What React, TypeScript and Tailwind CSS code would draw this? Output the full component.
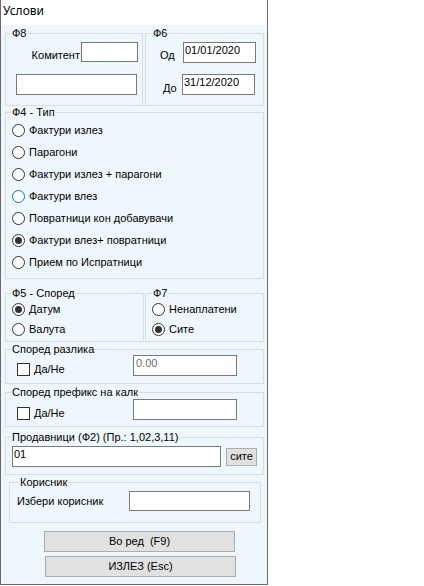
import React from "react";

function Radio({ checked = false, focus = false }: { checked?: boolean; focus?: boolean }) {
  return (
    <span
      className={`w-[13px] h-[13px] rounded-full border ${focus ? "border-[#0078d7]" : "border-[#333333]"} bg-white flex items-center justify-center shrink-0`}
    >
      {checked && <span className="w-[7px] h-[7px] rounded-full bg-[#333333]" />}
    </span>
  );
}

function Check() {
  return <span className="w-[13px] h-[13px] border border-[#333333] bg-white shrink-0" />;
}

function Group({
  title,
  className = "",
  legendClass = "ml-[5px]",
  children,
}: {
  title: string;
  className?: string;
  legendClass?: string;
  children?: React.ReactNode;
}) {
  return (
    <fieldset className={`border border-[#d7dde1] p-0 m-0 min-w-0 ${className}`}>
      <legend className={`leading-[12px] px-[1px] whitespace-pre ${legendClass}`}>{title}</legend>
      {children}
    </fieldset>
  );
}

function RadioRow({
  label,
  checked,
  focus,
  h = "h-[22px]",
}: {
  label: string;
  checked?: boolean;
  focus?: boolean;
  h?: string;
}) {
  return (
    <div className={`flex items-center gap-[4px] ${h}`}>
      <Radio checked={checked} focus={focus} />
      <span className="leading-[13px] whitespace-pre">{label}</span>
    </div>
  );
}

export default function App() {
  return (
    <div className="w-[268px] h-[585px] border-x border-b border-[#6b6b6b] flex flex-col text-[11px] text-black font-['Liberation_Sans',Arial,sans-serif]">
      <div className="h-[25px] bg-white pl-[2px] pt-[3px] text-[12px] leading-[16px] font-['Noto_Sans',sans-serif]">
        Услови
      </div>
      <div className="flex-1 bg-[#eef7fc] pl-[4px] pr-[3px] flex flex-col">
        {/* Row 1 */}
        <div className="flex gap-[2px] mt-[2px]">
          <Group title="Ф8" className="w-[138px] h-[79px]">
            <div className="flex justify-end items-end pr-[4px] mt-[3px] gap-[1px]">
              <span className="leading-[13px]">Комитент</span>
              <div className="w-[57px] h-[20px] bg-white border border-[#7a7a7a]" />
            </div>
            <div className="ml-[10px] mt-[12px] w-[121px] h-[21px] bg-white border border-[#7a7a7a]" />
          </Group>
          <Group title="Ф6" className="w-[119px] h-[79px]" legendClass="ml-[6px]">
            <div className="flex items-end mt-[3px] pl-[14px]">
              <span className="w-[23px] leading-[13px] mb-[1px]">Од</span>
              <div className="w-[73px] h-[21px] bg-white border border-[#7a7a7a] pl-[1px] pt-[1px] leading-[13px]">
                01/01/2020
              </div>
            </div>
            <div className="flex items-end mt-[11px] pl-[17px]">
              <span className="w-[19px] leading-[13px]">До</span>
              <div className="w-[73px] h-[21px] bg-white border border-[#7a7a7a] pl-[1px] pt-[1px] leading-[13px]">
                31/12/2020
              </div>
            </div>
          </Group>
        </div>

        {/* Ф4 */}
        <Group title="Ф4 - Тип" className="h-[173px]">
          <div className="pt-[1px] pl-[6px] flex flex-col">
            <RadioRow label="Фактури излез" />
            <RadioRow label="Парагони" />
            <RadioRow label="Фактури излез + парагони" />
            <RadioRow label="Фактури влез" focus />
            <RadioRow label="Повратници кон добавувачи" />
            <RadioRow label="Фактури влез+ повратници" checked />
            <RadioRow label="Прием по Испратници" />
          </div>
        </Group>

        {/* Ф5 / Ф7 */}
        <div className="flex gap-[1px] mt-[8px]">
          <Group title="Ф5 - Според" className="w-[139px] h-[55px]">
            <div className="pl-[6px] flex flex-col">
              <RadioRow label="Датум" checked h="h-[20px]" />
              <RadioRow label="Валута" h="h-[20px]" />
            </div>
          </Group>
          <Group title="Ф7" className="w-[119px] h-[55px]" legendClass="ml-[6px]">
            <div className="pl-[6px] flex flex-col">
              <RadioRow label="Ненаплатени" h="h-[20px]" />
              <RadioRow label="Сите" checked h="h-[20px]" />
            </div>
          </Group>
        </div>

        {/* Според разлика */}
        <Group title="Според разлика" className="h-[41px] mt-[1px]">
          <div className="flex items-end pl-[11px]">
            <div className="flex items-center gap-[4px] w-[116px]">
              <Check />
              <span className="leading-[13px]">Да/Не</span>
            </div>
            <div className="w-[104px] h-[21px] bg-white border border-[#7a7a7a] pl-[2px] leading-[13px] pt-[1px] text-[#6d6d6d]">
              0.00
            </div>
          </div>
        </Group>

        {/* Според префикс */}
        <Group title="Според префикс на калк" className="h-[41px] mt-[2px]">
          <div className="flex items-end pl-[11px] pt-[1px]">
            <div className="flex items-center gap-[4px] w-[116px]">
              <Check />
              <span className="leading-[13px]">Да/Не</span>
            </div>
            <div className="w-[104px] h-[21px] bg-white border border-[#7a7a7a]" />
          </div>
        </Group>

        {/* Продавници */}
        <Group title="Продавници (Ф2) (Пр.: 1,02,3,11)" className="h-[44px] mt-[4px]">
          <div className="flex items-center gap-[5px] pl-[6px] pt-[3px]">
            <div className="w-[209px] h-[21px] bg-white border border-[#7a7a7a] pl-[1px] pt-[1px] leading-[13px]">
              01
            </div>
            <div className="w-[31px] h-[18px] bg-[#e1e1e1] border border-[#adadad] flex items-center justify-center leading-[13px]">
              сите
            </div>
          </div>
        </Group>

        {/* Корисник */}
        <Group title="Корисник" className="h-[47px] mt-[1px] ml-[4px] mr-[3px]" legendClass="ml-[9px]">
          <div className="flex items-center justify-between pt-[3px] pl-[7px] pr-[10px]">
            <span className="leading-[13px]">Избери корисник</span>
            <div className="w-[121px] h-[20px] bg-white border border-[#7a7a7a]" />
          </div>
        </Group>

        {/* Buttons */}
        <div className="mt-[8px] ml-[39px] w-[191px] h-[21px] bg-[#e1e1e1] border border-[#adadad] flex items-center justify-center leading-[13px] whitespace-pre">
          {"Во ред  (F9)"}
        </div>
        <div className="mt-[4px] ml-[40px] w-[191px] h-[21px] bg-[#e1e1e1] border border-[#adadad] flex items-center justify-center leading-[13px]">
          ИЗЛЕЗ (Esc)
        </div>
      </div>
    </div>
  );
}
